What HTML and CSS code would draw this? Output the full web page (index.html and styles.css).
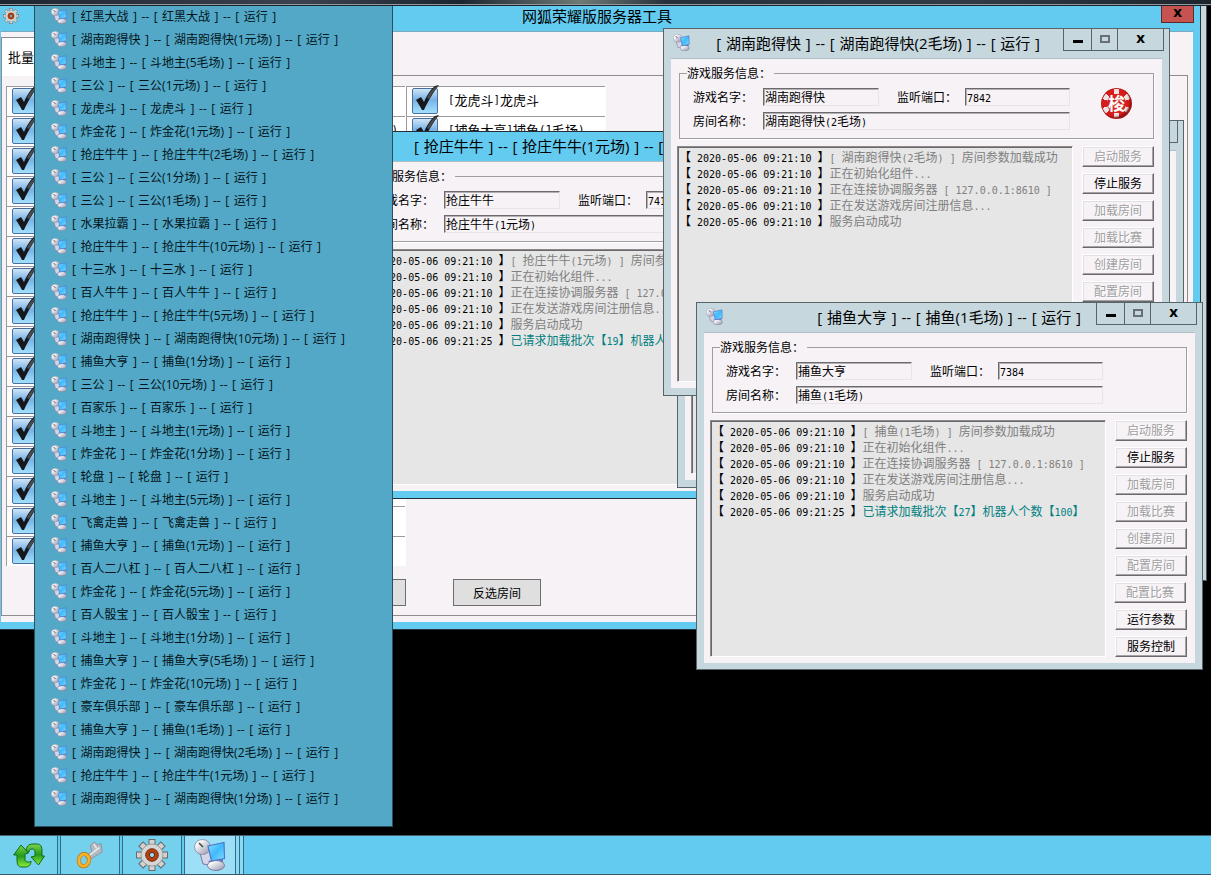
FILE: index.html
```html
<!DOCTYPE html>
<html lang="zh-CN">

<head>
    <meta charset="UTF-8">
    <title>网狐荣耀版服务器工具</title>
    <link rel="stylesheet" href="styles.css">
</head>

<body>
    <svg class="defs" width="0" height="0">
        <defs>
            <linearGradient id="screen" x1="0" y1="0" x2="1" y2="1">
                <stop offset="0" stop-color="#8fe0ff" />
                <stop offset="0.5" stop-color="#3fbafc" />
                <stop offset="1" stop-color="#86dcff" />
            </linearGradient>
            <linearGradient id="metal" x1="0" y1="0" x2="1" y2="1">
                <stop offset="0.2" stop-color="#ffffff" />
                <stop offset="1" stop-color="#8f8fa8" />
            </linearGradient>
            <linearGradient id="box" x1="0" y1="0" x2="0" y2="1">
                <stop offset="0" stop-color="#d3e8f8" />
                <stop offset="0.45" stop-color="#78b2e6" />
                <stop offset="1" stop-color="#a4e2ff" />
            </linearGradient>
            <linearGradient id="leaf" x1="0" y1="0" x2="0" y2="1">
                <stop offset="0" stop-color="#7bd64c" />
                <stop offset="0.5" stop-color="#249a1c" />
                <stop offset="1" stop-color="#8bec3e" />
            </linearGradient>

            <!-- satellite dish and monitor -->
            <symbol id="ico-service" viewBox="0 0 32 32">
                <path d="M6 14l9-3 3 8-2 7-7-1z" fill="#d5d5e6" stroke="#77779a" stroke-width="1" />
                <path d="M14 22l15-3 0 7-10 1z" fill="#7277b8" />
                <ellipse cx="22" cy="26.5" rx="8.5" ry="5" fill="url(#metal)" stroke="#7a7a9c" stroke-width="1" />
                <ellipse cx="8.5" cy="8" rx="8" ry="7.5" fill="url(#metal)" stroke="#85859a" stroke-width="0.8" />
                <path d="M5 4l4 4" stroke="#44444c" stroke-width="1.6" />
                <path d="M14 7l16-3.5 0.5 16-13 2.5z" fill="url(#screen)" stroke="#4a78cc" stroke-width="1.2" />
            </symbol>

            <symbol id="ico-gear" viewBox="0 0 32 32">
                <g fill="#d2d2d2" stroke="#6b6866" stroke-width="1">
                    <rect x="13" y="0.5" width="6" height="31" />
                    <rect x="13" y="0.5" width="6" height="31" transform="rotate(45 16 16)" />
                    <rect x="13" y="0.5" width="6" height="31" transform="rotate(90 16 16)" />
                    <rect x="13" y="0.5" width="6" height="31" transform="rotate(135 16 16)" />
                </g>
                <circle cx="16" cy="16" r="11" fill="#dadada" stroke="#8e8b89" stroke-width="0.8" />
                <circle cx="16" cy="16" r="10" fill="#d6d6d6" />
                <circle cx="16" cy="16" r="6.3" fill="#b5400f" stroke="#7c2b0a" stroke-width="1" />
                <circle cx="16" cy="16" r="2.6" fill="#9bdcf4" stroke="#5a2a15" stroke-width="1" />
            </symbol>

            <symbol id="ico-check" viewBox="0 0 28 30">
                <rect x="0.5" y="3.5" width="25" height="25" rx="1.5" fill="url(#box)" stroke="#4d6f9c" />
                <path d="M4 15l5-3 3 5C15 10 19 4 23 1l4-1C22 6 16 16 12 25l-2 0c-2-4-4-7-6-10z" fill="#15171a" />
                <path d="M23 2l3-1C22 6 19 10 17 14l-2-1C17 8 20 5 23 2z" fill="#4a4d50" />
            </symbol>

            <symbol id="ico-refresh" viewBox="0 0 32 25">
                <g fill="url(#leaf)" stroke="#136b12" stroke-width="1" stroke-linejoin="round">
                    <path d="M13 9C13 4 15 1 20 1h4c4 0 5 3 5 7v5h2.500l-6 9-7.500-8 4-1V9c0-2-1-3-3-3-2 0-3 1-3 3z" />
                    <path d="M8 2l7.500 8-3.500 1v5c0 2 1 3 3 3 1 0 2 0 3-1 0 4-2 6-6 6H9c-4 0-5-3-5-7v-5H0.700z" />
                </g>
            </symbol>

            <symbol id="ico-key" viewBox="0 0 30 30">
                <path d="M10 17l7-6-2-6 5-4 3 3 4-1 1 9-7 4-8 5z" fill="#b3b9c1" stroke="#8b9199" stroke-width="1" />
                <path d="M12 17l13-10M19 3l3 5" stroke="#e6ebef" stroke-width="1.6" />
                <ellipse cx="8.500" cy="20.500" rx="5.500" ry="6.500" fill="none" stroke="#b8740c" stroke-width="4.400" transform="rotate(15 8.500 20.500)" />
                <ellipse cx="8.500" cy="20.500" rx="5.500" ry="6.500" fill="none" stroke="#f5b22c" stroke-width="3" transform="rotate(15 8.500 20.500)" />
            </symbol>
        </defs>
    </svg>

    <div class="desktop">
        <div class="back-window"></div>

        <!-- main tool window -->
        <section class="tool">
            <header class="tool-title">
                <svg class="tool-icon"><use href="#ico-gear" /></svg>
                <h1>网狐荣耀版服务器工具</h1>
                <span class="tool-close">x</span>
            </header>
            <div class="tool-body">
                <div class="tabs"><span class="tab">批量加载</span></div>
                <div class="pane">
                    <div class="rooms">
                        <ul class="room-col">
                            <li><svg><use href="#ico-check" /></svg></li>
                            <li><svg><use href="#ico-check" /></svg></li>
                            <li><svg><use href="#ico-check" /></svg></li>
                            <li><svg><use href="#ico-check" /></svg></li>
                            <li><svg><use href="#ico-check" /></svg></li>
                            <li><svg><use href="#ico-check" /></svg></li>
                            <li><svg><use href="#ico-check" /></svg></li>
                            <li><svg><use href="#ico-check" /></svg></li>
                            <li><svg><use href="#ico-check" /></svg></li>
                            <li><svg><use href="#ico-check" /></svg></li>
                            <li><svg><use href="#ico-check" /></svg></li>
                            <li><svg><use href="#ico-check" /></svg></li>
                            <li><svg><use href="#ico-check" /></svg></li>
                            <li><svg><use href="#ico-check" /></svg></li>
                            <li><svg><use href="#ico-check" /></svg></li>
                            <li><svg><use href="#ico-check" /></svg></li>
                        </ul>
                        <ul class="room-col">
                            <li></li>
                            <li class="tail"><i>)</i></li>
                            <li></li><li></li><li></li><li></li><li></li><li></li>
                            <li></li><li></li><li></li><li></li><li></li><li></li>
                            <li></li><li></li>
                        </ul>
                        <ul class="room-col">
                            <li><svg><use href="#ico-check" /></svg><i>[</i>龙虎斗<i>]</i>龙虎斗</li>
                            <li><svg><use href="#ico-check" /></svg><i>[</i>捕鱼大亨<i>]</i>捕鱼<i>(1</i>毛场<i>)</i></li>
                        </ul>
                    </div>
                    <div class="tool-actions">
                        <button class="flat"></button>
                        <button class="flat">反选房间</button>
                    </div>
                </div>
            </div>
        </section>

        <!-- service windows, back to front -->
        <section class="win win-b active">
            <header class="win-title">
                <h2>[ 抢庄牛牛 ] -- [ 抢庄牛牛(1元场) ] -- [</h2>
            </header>
            <div class="win-body">
                <fieldset class="info">
                    <legend>游戏服务信息：</legend>
                    <div class="row">
                        <label>游戏名字：</label><span class="field f-name">抢庄牛牛</span>
                        <label class="port">监听端口：</label><span class="field f-port"><i>741</i></span>
                    </div>
                    <div class="row">
                        <label>房间名称：</label><span class="field f-room">抢庄牛牛<i>(1</i>元场<i>)</i></span>
                    </div>
                </fieldset>
                <div class="lower">
                    <ul class="log">
                        <li>【<i> 2020-05-06 09:21:10 </i>】<em><i>[ </i>抢庄牛牛<i>(1</i>元场<i>) ] </i>房间参数</em></li>
                        <li>【<i> 2020-05-06 09:21:10 </i>】<em>正在初始化组件<i>...</i></em></li>
                        <li>【<i> 2020-05-06 09:21:10 </i>】<em>正在连接协调服务器<i> [ 127.0</i></em></li>
                        <li>【<i> 2020-05-06 09:21:10 </i>】<em>正在发送游戏房间注册信息<i>...</i></em></li>
                        <li>【<i> 2020-05-06 09:21:10 </i>】<em>服务启动成功</em></li>
                        <li>【<i> 2020-05-06 09:21:25 </i>】<em class="ok">已请求加载批次【<i>19</i>】机器人</em></li>
                    </ul>
                </div>
            </div>
        </section>

        <section class="win win-d">
            <header class="win-title">
                <div class="ctl"><span class="min"></span><span class="max"></span><span class="cls"></span></div>
            </header>
            <div class="win-body">
                <fieldset class="info"></fieldset>
                <div class="lower"><ul class="log"></ul></div>
            </div>
        </section>

        <section class="win win-a">
            <header class="win-title">
                <svg class="win-icon"><use href="#ico-service" /></svg>
                <h2>[ 湖南跑得快 ] -- [ 湖南跑得快(2毛场) ] -- [ 运行 ]</h2>
                <div class="ctl"><span class="min"></span><span class="max"></span><span class="cls">x</span></div>
            </header>
            <div class="win-body">
                <fieldset class="info">
                    <legend>游戏服务信息：</legend>
                    <div class="row">
                        <label>游戏名字：</label><span class="field f-name">湖南跑得快</span>
                        <label class="port">监听端口：</label><span class="field f-port"><i>7842</i></span>
                    </div>
                    <div class="row">
                        <label>房间名称：</label><span class="field f-room">湖南跑得快<i>(2</i>毛场<i>)</i></span>
                    </div>
                    <span class="chip">梭</span>
                </fieldset>
                <div class="lower">
                    <ul class="log">
                        <li>【<i> 2020-05-06 09:21:10 </i>】<em><i>[ </i>湖南跑得快<i>(2</i>毛场<i>) ] </i>房间参数加载成功</em></li>
                        <li>【<i> 2020-05-06 09:21:10 </i>】<em>正在初始化组件<i>...</i></em></li>
                        <li>【<i> 2020-05-06 09:21:10 </i>】<em>正在连接协调服务器<i> [ 127.0.0.1:8610 ]</i></em></li>
                        <li>【<i> 2020-05-06 09:21:10 </i>】<em>正在发送游戏房间注册信息<i>...</i></em></li>
                        <li>【<i> 2020-05-06 09:21:10 </i>】<em>服务启动成功</em></li>
                    </ul>
                    <div class="buttons">
                        <button disabled>启动服务</button>
                        <button>停止服务</button>
                        <button disabled>加载房间</button>
                        <button disabled>加载比赛</button>
                        <button disabled>创建房间</button>
                        <button disabled>配置房间</button>
                    </div>
                </div>
            </div>
        </section>

        <section class="win win-c">
            <header class="win-title">
                <svg class="win-icon"><use href="#ico-service" /></svg>
                <h2>[ 捕鱼大亨 ] -- [ 捕鱼(1毛场) ] -- [ 运行 ]</h2>
                <div class="ctl"><span class="min"></span><span class="max"></span><span class="cls">x</span></div>
            </header>
            <div class="win-body">
                <fieldset class="info">
                    <legend>游戏服务信息：</legend>
                    <div class="row">
                        <label>游戏名字：</label><span class="field f-name">捕鱼大亨</span>
                        <label class="port">监听端口：</label><span class="field f-port"><i>7384</i></span>
                    </div>
                    <div class="row">
                        <label>房间名称：</label><span class="field f-room">捕鱼<i>(1</i>毛场<i>)</i></span>
                    </div>
                </fieldset>
                <div class="lower">
                    <ul class="log">
                        <li>【<i> 2020-05-06 09:21:10 </i>】<em><i>[ </i>捕鱼<i>(1</i>毛场<i>) ] </i>房间参数加载成功</em></li>
                        <li>【<i> 2020-05-06 09:21:10 </i>】<em>正在初始化组件<i>...</i></em></li>
                        <li>【<i> 2020-05-06 09:21:10 </i>】<em>正在连接协调服务器<i> [ 127.0.0.1:8610 ]</i></em></li>
                        <li>【<i> 2020-05-06 09:21:10 </i>】<em>正在发送游戏房间注册信息<i>...</i></em></li>
                        <li>【<i> 2020-05-06 09:21:10 </i>】<em>服务启动成功</em></li>
                        <li>【<i> 2020-05-06 09:21:25 </i>】<em class="ok">已请求加载批次【<i>27</i>】机器人个数【<i>100</i>】</em></li>
                    </ul>
                    <div class="buttons">
                        <button disabled>启动服务</button>
                        <button>停止服务</button>
                        <button disabled>加载房间</button>
                        <button disabled>加载比赛</button>
                        <button disabled>创建房间</button>
                        <button disabled>配置房间</button>
                        <button class="shift" disabled>配置比赛</button>
                        <button>运行参数</button>
                        <button>服务控制</button>
                    </div>
                </div>
            </div>
        </section>

        <!-- window list opened from the taskbar -->
        <ul class="task-list">
            <li><svg><use href="#ico-service" /></svg>[ 红黑大战 ] -- [ 红黑大战 ] -- [ 运行 ]</li>
            <li><svg><use href="#ico-service" /></svg>[ 湖南跑得快 ] -- [ 湖南跑得快(1元场) ] -- [ 运行 ]</li>
            <li><svg><use href="#ico-service" /></svg>[ 斗地主 ] -- [ 斗地主(5毛场) ] -- [ 运行 ]</li>
            <li><svg><use href="#ico-service" /></svg>[ 三公 ] -- [ 三公(1元场) ] -- [ 运行 ]</li>
            <li><svg><use href="#ico-service" /></svg>[ 龙虎斗 ] -- [ 龙虎斗 ] -- [ 运行 ]</li>
            <li><svg><use href="#ico-service" /></svg>[ 炸金花 ] -- [ 炸金花(1元场) ] -- [ 运行 ]</li>
            <li><svg><use href="#ico-service" /></svg>[ 抢庄牛牛 ] -- [ 抢庄牛牛(2毛场) ] -- [ 运行 ]</li>
            <li><svg><use href="#ico-service" /></svg>[ 三公 ] -- [ 三公(1分场) ] -- [ 运行 ]</li>
            <li><svg><use href="#ico-service" /></svg>[ 三公 ] -- [ 三公(1毛场) ] -- [ 运行 ]</li>
            <li><svg><use href="#ico-service" /></svg>[ 水果拉霸 ] -- [ 水果拉霸 ] -- [ 运行 ]</li>
            <li><svg><use href="#ico-service" /></svg>[ 抢庄牛牛 ] -- [ 抢庄牛牛(10元场) ] -- [ 运行 ]</li>
            <li><svg><use href="#ico-service" /></svg>[ 十三水 ] -- [ 十三水 ] -- [ 运行 ]</li>
            <li><svg><use href="#ico-service" /></svg>[ 百人牛牛 ] -- [ 百人牛牛 ] -- [ 运行 ]</li>
            <li><svg><use href="#ico-service" /></svg>[ 抢庄牛牛 ] -- [ 抢庄牛牛(5元场) ] -- [ 运行 ]</li>
            <li><svg><use href="#ico-service" /></svg>[ 湖南跑得快 ] -- [ 湖南跑得快(10元场) ] -- [ 运行 ]</li>
            <li><svg><use href="#ico-service" /></svg>[ 捕鱼大亨 ] -- [ 捕鱼(1分场) ] -- [ 运行 ]</li>
            <li><svg><use href="#ico-service" /></svg>[ 三公 ] -- [ 三公(10元场) ] -- [ 运行 ]</li>
            <li><svg><use href="#ico-service" /></svg>[ 百家乐 ] -- [ 百家乐 ] -- [ 运行 ]</li>
            <li><svg><use href="#ico-service" /></svg>[ 斗地主 ] -- [ 斗地主(1元场) ] -- [ 运行 ]</li>
            <li><svg><use href="#ico-service" /></svg>[ 炸金花 ] -- [ 炸金花(1分场) ] -- [ 运行 ]</li>
            <li><svg><use href="#ico-service" /></svg>[ 轮盘 ] -- [ 轮盘 ] -- [ 运行 ]</li>
            <li><svg><use href="#ico-service" /></svg>[ 斗地主 ] -- [ 斗地主(5元场) ] -- [ 运行 ]</li>
            <li><svg><use href="#ico-service" /></svg>[ 飞禽走兽 ] -- [ 飞禽走兽 ] -- [ 运行 ]</li>
            <li><svg><use href="#ico-service" /></svg>[ 捕鱼大亨 ] -- [ 捕鱼(1元场) ] -- [ 运行 ]</li>
            <li><svg><use href="#ico-service" /></svg>[ 百人二八杠 ] -- [ 百人二八杠 ] -- [ 运行 ]</li>
            <li><svg><use href="#ico-service" /></svg>[ 炸金花 ] -- [ 炸金花(5元场) ] -- [ 运行 ]</li>
            <li><svg><use href="#ico-service" /></svg>[ 百人骰宝 ] -- [ 百人骰宝 ] -- [ 运行 ]</li>
            <li><svg><use href="#ico-service" /></svg>[ 斗地主 ] -- [ 斗地主(1分场) ] -- [ 运行 ]</li>
            <li><svg><use href="#ico-service" /></svg>[ 捕鱼大亨 ] -- [ 捕鱼大亨(5毛场) ] -- [ 运行 ]</li>
            <li><svg><use href="#ico-service" /></svg>[ 炸金花 ] -- [ 炸金花(10元场) ] -- [ 运行 ]</li>
            <li><svg><use href="#ico-service" /></svg>[ 豪车俱乐部 ] -- [ 豪车俱乐部 ] -- [ 运行 ]</li>
            <li><svg><use href="#ico-service" /></svg>[ 捕鱼大亨 ] -- [ 捕鱼(1毛场) ] -- [ 运行 ]</li>
            <li><svg><use href="#ico-service" /></svg>[ 湖南跑得快 ] -- [ 湖南跑得快(2毛场) ] -- [ 运行 ]</li>
            <li><svg><use href="#ico-service" /></svg>[ 抢庄牛牛 ] -- [ 抢庄牛牛(1元场) ] -- [ 运行 ]</li>
            <li><svg><use href="#ico-service" /></svg>[ 湖南跑得快 ] -- [ 湖南跑得快(1分场) ] -- [ 运行 ]</li>
        </ul>

        <div class="top-strip"></div>

        <nav class="taskbar">
            <a class="task first"><svg class="t-refresh"><use href="#ico-refresh" /></svg></a>
            <a class="task"><svg class="t-key"><use href="#ico-key" /></svg></a>
            <a class="task"><svg><use href="#ico-gear" /></svg></a>
            <a class="task current"><svg><use href="#ico-service" /></svg></a>
            <span class="stack"></span>
            <span class="stack"></span>
        </nav>
    </div>
</body>

</html>
```

FILE: styles.css
```css
:root {
    --blue: #63cbf0;
    --frame: #c6d7dd;
    --face: #f6f2f6;
    --line: #9c9a9c;
    --ui: "Open Sans", "Noto Sans CJK SC", sans-serif;
    --song: "Noto Sans CJK SC", sans-serif;
    --mono: "DejaVu Sans Mono", "Liberation Mono", monospace;
}

*,
*::before {
    margin: 0;
    padding: 0;
    box-sizing: border-box;
}

body {
    background: #000;
    color: #000;
    font-family: var(--song);
    font-size: 12px;
    overflow: hidden;
}

ul {
    list-style: none;
}

.defs {
    position: absolute;
}

.desktop {
    position: relative;
    width: 1211px;
    height: 875px;
    overflow: hidden;
}

/* half-width characters take 6px */
i {
    font-family: var(--mono);
    font-style: normal;
    font-size: 10px;
    white-space: pre;
}

.top-strip {
    position: absolute;
    top: 0;
    left: 0;
    width: 100%;
    height: 6px;
    background: linear-gradient(90deg, #1e2731, #3a434d 25%, #1d2530 38%, #6e7a76 48%, #28313b 55%, #323c46 80%, #1d242c);
    border-bottom: 1px solid #17242c;
    box-shadow: inset 0 -1px 0 #94999d;
}

.back-window {
    position: absolute;
    top: 5px;
    left: 700px;
    width: 507px;
    height: 576px;
    background: var(--frame);
    border: 1px solid #4c575b;
}

/* Main tool window */
.tool {
    position: absolute;
    top: 5px;
    left: 0;
    width: 1201px;
    height: 625px;
    padding: 0 7px 7px 1px;
    background: var(--blue);
    border: 1px solid #26343b;
    border-left: 0;
    display: flex;
    flex-direction: column;
    isolation: isolate;
}

.tool-title {
    height: 25px;
    display: flex;
    align-items: flex-start;
    justify-content: space-between;
    margin-right: -1px;
}

.tool-title h1 {
    font: 15px/20px var(--ui);
    margin-left: 14px;
}

.tool-icon {
    width: 16px;
    height: 16px;
    margin: 2px 0 0 2px;
}

.tool-close {
    width: 33px;
    height: 17px;
    background: #c6534f;
    border: 1px solid #5d2a2c;
    border-top: 0;
    text-align: center;
    font: bold 15px/11px "Open Sans", sans-serif;
}

.tool-body {
    flex: 1;
    background: var(--face);
    border-top: 1px solid #7ba9c0;
    padding-top: 5px;
    display: flex;
    flex-direction: column;
}

.tabs {
    height: 38px;
    display: flex;
}

.tab {
    width: 90px;
    margin-bottom: -1px;
    background: #fff;
    border: 1px solid #8e8c8e;
    border-bottom: 0;
    padding-left: 6px;
    line-height: 37px;
    font-size: 13px;
    z-index: 1;
}

.pane {
    height: 541px;
    width: 1187px;
    border: 1px solid #8e8c8e;
    padding: 10px 0 0 4px;
}

.rooms {
    display: flex;
    align-items: flex-start;
}

.room-col {
    width: 200px;
    background: #fff;
}

.room-col li {
    height: 30px;
    border-top: 1px solid var(--line);
    border-left: 1px solid var(--line);
    display: flex;
    align-items: center;
    font-size: 13px;
    margin-right: 1px;
    padding-bottom: 4px;
}

.room-col svg {
    flex: none;
    width: 28px;
    height: 30px;
    margin: 0 8px 0 5px;
}

.room-col i {
    font-size: 10.8px;
}

.room-col .tail {
    justify-content: flex-end;
    padding-right: 7px;
}

.tool-actions {
    display: flex;
    gap: 47px;
    padding: 13px 0 0 312px;
}

.flat {
    width: 88px;
    height: 27px;
    background: #dfdfdf;
    border: 1px solid #6f6d6f;
    font: 12px var(--song);
}

/* Service windows */
.win {
    position: absolute;
    width: 507px;
    height: 368px;
    background: var(--frame);
    border: 1px solid #596468;
    padding: 0 7px 7px;
    display: flex;
    flex-direction: column;
}

.win.active {
    background: var(--blue);
    border-color: #1f3038;
}

.win-a {
    left: 663px;
    top: 28px;
}

.win-b {
    left: 344px;
    top: 131px;
}

.win-c {
    left: 696px;
    top: 302px;
}

.win-d {
    left: 677px;
    top: 120px;
}

.win-title {
    height: 29px;
    flex: none;
    display: flex;
    justify-content: flex-end;
    align-items: flex-start;
}

.win-title h2 {
    font: 15px/28px var(--ui);
    word-spacing: 0.85px;
    white-space: nowrap;
}

.win-icon {
    width: 17px;
    height: 17px;
    margin: 5px auto 0 2px;
}

.win-a h2 {
    margin-right: 23px;
}

.win-b h2 {
    margin: 0 auto 0 62px;
}

.win-c h2 {
    margin-right: 15px;
}

.ctl {
    width: 101px;
    height: 22px;
    margin-right: -2px;
    flex: none;
    display: flex;
    border: 1px solid #596468;
    border-top: 0;
}

.ctl span {
    display: flex;
    align-items: center;
    justify-content: center;
}

.ctl .min {
    width: 27px;
}

.ctl .min::before {
    content: "";
    width: 10px;
    height: 3px;
    margin-top: 4px;
    background: #000;
}

.ctl .max {
    width: 27px;
    border: 1px solid #596468;
    border-width: 0 1px;
}

.ctl .max::before {
    content: "";
    width: 10px;
    height: 8px;
    margin-top: -2px;
    border: 2px solid #6a6f72;
}

.ctl .cls {
    flex: 1;
    font: bold 15px/15px "Open Sans", sans-serif;
    padding-bottom: 4px;
}

.win-body {
    flex: 1;
    background: var(--face);
    border-top: 1px solid #b0bec6;
    padding: 5px 8px 6px 6px;
    display: flex;
    flex-direction: column;
}

.info {
    position: relative;
    height: 75px;
    margin: 0 0 7px 2px;
    border: 1px solid #9f9d9f;
    box-shadow: 1px 1px 0 #fff;
    padding-left: 13px;
    min-width: 0;
}

.info legend {
    margin-left: -6px;
    padding-right: 3px;
    line-height: 18px;
    height: 18px;
}

.win-d .info {
    height: 66px;
    margin-top: 9px;
}

.row {
    display: flex;
    height: 18px;
    line-height: 17px;
    margin: 6px 0;
    white-space: nowrap;
}

.row label {
    width: 70px;
}

.row .port {
    width: 68px;
    margin-left: 18px;
}

.field {
    height: 18px;
    padding-left: 1px;
    border: 1px solid;
    border-color: #6d6a6d #e8e5e8 #e8e5e8 #6d6a6d;
    box-shadow: inset 1px 1px 0 #b3b0b3;
    line-height: 16px;
}

.f-name {
    width: 116px;
}

.f-port {
    width: 105px;
}

.f-room {
    width: 307px;
}

.chip {
    position: absolute;
    left: 421px;
    top: 6px;
    width: 31px;
    height: 31px;
    border-radius: 50%;
    background:
        radial-gradient(circle, #d42420 0 9px, #fff0 10px),
        repeating-conic-gradient(from -12deg, #efe4e2 0 24deg, #d81c1c 24deg 60deg);
    box-shadow: inset 0 0 0 1px #b51b1b, inset -2px -2px 2px #7a1010;
    color: #fff;
    font-size: 17px;
    font-weight: bold;
    line-height: 29px;
    text-align: center;
}

.lower {
    flex: 1;
    display: flex;
    justify-content: space-between;
}

.log {
    width: 396px;
    background: #e6e6e6;
    border: 1px solid;
    border-color: #8b898b #fff #fff #8b898b;
    box-shadow: inset 1px 1px 0 #6a686a;
    padding: 2px 0 0 1px;
    overflow: hidden;
}

.log li {
    height: 16px;
    line-height: 16px;
    white-space: nowrap;
}

.log em {
    font-style: normal;
    color: #808080;
}

.log .ok {
    color: #008080;
}

.buttons {
    display: flex;
    flex-direction: column;
    gap: 6px;
}

.buttons button {
    width: 72px;
    height: 21px;
    padding-bottom: 2px;
    background: var(--face);
    border: 1px solid;
    border-color: #fff #6b696b #6b696b #fff;
    box-shadow: inset -1px -1px 0 #a5a3a5, inset 1px 1px 0 #e3e0e3;
    font: 12px/16px var(--song);
    color: #000;
}

.buttons button:disabled {
    color: #a09ea0;
    text-shadow: 1px 1px 0 #fff;
}

.buttons .shift {
    margin-left: -1px;
    margin-right: 1px;
}

/* Window list */
.task-list {
    position: absolute;
    left: 34px;
    top: 0;
    width: 359px;
    height: 827px;
    padding: 3px 0 0 16px;
    background: #52a8c6;
    border: 1px solid #28505f;
}

.task-list li {
    height: 23px;
    display: flex;
    align-items: center;
    font: 12px var(--ui);
    word-spacing: 1.4px;
    color: #04141a;
    white-space: pre;
}

.task-list svg {
    width: 16px;
    height: 16px;
    margin: 0 5px 0 0;
}

/* Taskbar */
.taskbar {
    position: absolute;
    left: 0;
    top: 835px;
    width: 100%;
    height: 40px;
    display: flex;
    background: var(--blue);
    border-top: 1px solid #47606b;
    border-bottom: 1px solid #37596a;
}

.task {
    width: 60px;
    margin-right: 2px;
    display: flex;
    align-items: center;
    justify-content: center;
    background: #74d1ee;
    border: 1px solid #2f6d86;
    border-width: 0 1px;
}

.task.first {
    width: 58px;
    border-left: 0;
}

.task.current {
    width: 52px;
    margin-right: 0;
    background: #9cdff6;
}

.task svg {
    width: 32px;
    height: 32px;
}

.task .t-refresh {
    width: 32px;
    height: 25px;
}

.task .t-key {
    width: 28px;
    height: 28px;
}

.stack {
    width: 4px;
    background: #8bdaf3;
    border-right: 1px solid #2f6d86;
}
```
